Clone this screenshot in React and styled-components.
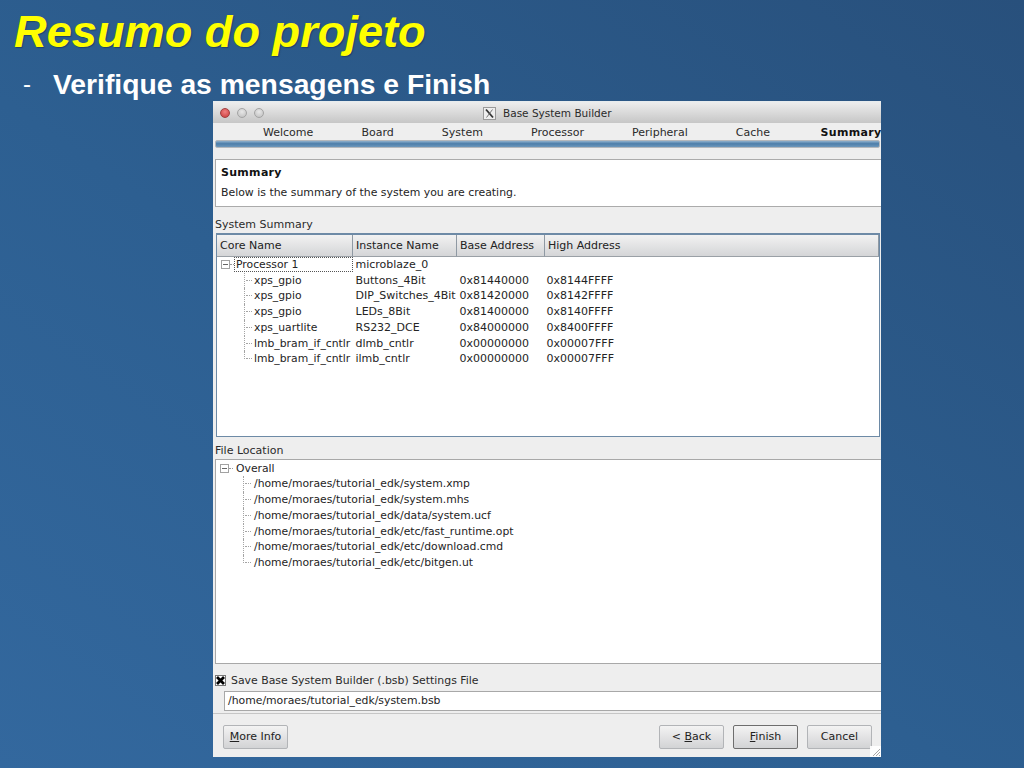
import React from "react";
import styled, { createGlobalStyle } from "styled-components";

const Global = createGlobalStyle`
  html, body { margin: 0; padding: 0; }
  body { width: 1024px; height: 768px; overflow: hidden; }
`;

const Slide = styled.div`
  width: 1024px; height: 768px; box-sizing: border-box; overflow: hidden;
  background: linear-gradient(35deg, #33689e 0%, #2d5f91 45%, #28507c 100%);
  font-family: "Liberation Sans", Arial, sans-serif;
  padding: 5px 0 0 14px;
`;
const Title = styled.h1`
  margin: 0; font-size: 45.2px; line-height: 54px; font-weight: 700; font-style: italic; color: #ffff00;
  text-shadow: 1px 1px 1px rgba(20,40,70,.5);
`;
const Bullet = styled.div`
  display: flex; margin: 9px 0 0 9px; color: #fff; font-size: 28.3px; line-height: 32px; font-weight: 700;
  height: 33px; white-space: nowrap;
`;
const Dash = styled.span`width: 30px; font-weight: 400; font-size: 24px;`;
const Win = styled.div`
  margin-left: 199px; width: 668px; height: 656px; display: flex; flex-direction: column;
  background: #eeeeee; color: #242424; overflow: hidden; position: relative;
  font-family: "DejaVu Sans", sans-serif; font-size: 11px; line-height: 15.75px;
`;
const TitleBar = styled.div`
  height: 22px; flex: none; box-sizing: border-box; display: flex; align-items: center; padding: 2px 0 0 7px;
  background: linear-gradient(#e6ecef 0, #ececec 2px, #c6c6c6 100%);
`;
const Light = styled.span`
  width: 10px; height: 10px; border-radius: 50%; margin-right: 7px; box-sizing: border-box;
  border: 1px solid ${p => p.$red ? "#a04040" : "#a4a4a4"};
  background: ${p => p.$red ? "radial-gradient(circle at 50% 35%, #f08080, #c83a3a)" : "radial-gradient(circle at 50% 35%, #e8e8e8, #bdbdbd)"};
`;
const WinTitle = styled.div`
  display: flex; align-items: center; gap: 6px; margin-left: 212px; color: #2a2a2a; font-size: 10.5px;
`;
const WinTitleText = styled.span`padding: 2px 0 0 1px;`;
const Tabs = styled.div`
  height: 16px; flex: none; box-sizing: border-box; padding: 2px 0 0 50px;
  display: flex; gap: 48.1px; white-space: nowrap; color: #2b2b2b;
`;
const Tab = styled.span`
  font-weight: ${p => p.$on ? 700 : 400}; color: ${p => p.$on ? "#111" : "inherit"};
  letter-spacing: ${p => p.$on ? ".3px" : "0"};
  margin-left: ${p => p.$on ? "2.5px" : "0"};
`;
const Progress = styled.div`
  height: 8px; flex: none; margin: 1px 1px 0 2px; box-sizing: border-box; border: 1px solid #b4b8bc; border-radius: 2px;
  background: linear-gradient(#8fb0cc, #4d7eaa 45%, #6d97bb);
`;
const Header = styled.div`
  height: 48px; flex: none; margin: 11px 0 0 2px; box-sizing: border-box; padding: 5px 0 0 5px;
  background: #fff; border: 1px solid #ababab; border-right: 0; font-size: 10.9px;
`;
const HeadTitle = styled.div`font-weight: 700; color: #111; height: 20px; line-height: 15px; font-size: 11px; letter-spacing: .3px;`;
const Label = styled.div`
  flex: none; margin: ${p => p.$top}px 0 0 2px; height: 15px; line-height: 15px; color: #2b2b2b;
`;
const TableFrame = styled.div`
  flex: none; height: 204px; margin: 1px 1px 0 3px; box-sizing: border-box;
  background: #fff; border: 1px solid #6d8aa6; border-top-width: 2px;
`;
const FileFrame = styled.div`
  flex: none; height: 205px; margin: 1px 0 0 2px; box-sizing: border-box;
  background: #fff; border: 1px solid #a8a8a8; border-right: 0; padding-top: .5px;
`;
const HeadRow = styled.div`
  display: grid; grid-template-columns: 136px 104px 88px 1fr; height: 22px; margin-bottom: -.1px;
`;
const HeadCell = styled.div`
  display: flex; align-items: center; padding-left: 3px; color: #222; box-sizing: border-box;
  background: linear-gradient(#f2f2f2, #d4d5d7);
  border-right: 1px solid #8f99a3; border-bottom: 1px solid #9aa0a6;
`;
const Row = styled.div`
  display: grid; grid-template-columns: 136px 104px 87px 1fr; height: 15.75px; white-space: nowrap;
`;
const CoreCell = styled.div`
  display: flex; align-items: center; padding-left: ${p => p.$child ? 27 : 4}px;
  font-size: 10.8px;
`;
const Cell = styled.div`padding-left: 2.5px;`;
const Toggle = styled.span`
  width: 9px; height: 9px; flex: none; box-sizing: border-box; border: 1px solid #a2a2a2; position: relative; background: #fff;
  &::after { content: ""; position: absolute; left: 1px; right: 1px; top: 3px; height: 1px; background: #666; }
`;
const Dots = styled.span`width: 4px; flex: none; border-top: 1px dotted #999;`;
const Focused = styled.span`
  flex: 1; padding-left: 1px; height: 15px; line-height: 14px; box-sizing: border-box; border: 1px dotted #555;
`;
const Plain = styled.span`padding-left: 3px;`;
const Branch = styled.span`
  width: 8px; flex: none; box-sizing: border-box; position: relative; margin-right: ${p => p.$gap}px;
  border-left: 1px dotted #a4a4a4; height: ${p => p.$last ? "8px" : "15.75px"};
  align-self: flex-start;
  &::after { content: ""; position: absolute; left: 1px; width: 6px; top: 7px; border-top: 1px dotted #a4a4a4; }
`;
const SaveRow = styled.div`
  flex: none; display: flex; align-items: center; gap: 5px; margin: 9px 0 0 2px; height: 15px; color: #2b2b2b; font-size: 10.9px;
`;
const Check = styled.span`
  width: 11px; height: 11px; flex: none; box-sizing: border-box; border: 1px solid #777; background: #fff; display: flex;
`;
const PathInput = styled.div`
  flex: none; height: 20px; margin: 3px 0 0 11px; padding-left: 3px; box-sizing: border-box; background: #fff;
  border: 1px solid #a8a8a8; border-right: 0; line-height: 18px; font-size: 10.85px;
`;
const Separator = styled.div`flex: none; height: 1px; background: #c6c6c6; margin-top: 2px;`;
const ButtonBar = styled.div`
  flex: none; display: flex; gap: 9px; padding: 11px 9px 0 10px;
`;
const Btn = styled.div`
  width: 65px; height: 24px; box-sizing: border-box; border-radius: 2px; display: flex; align-items: center; justify-content: center;
  color: #222; background: linear-gradient(#f3f3f3, #d2d3d5);
  border: 1px solid ${p => p.$def ? "#6e6e6e" : "#b2b4b7"};
  ${p => p.$push ? "margin-right: auto;" : ""}
`;
const Key = styled.span`text-decoration: underline;`;
const Grip = styled.svg`position: absolute; right: 0; bottom: 0;`;

const rows = [
  ["xps_gpio", "Buttons_4Bit", "0x81440000", "0x8144FFFF"],
  ["xps_gpio", "DIP_Switches_4Bit", "0x81420000", "0x8142FFFF"],
  ["xps_gpio", "LEDs_8Bit", "0x81400000", "0x8140FFFF"],
  ["xps_uartlite", "RS232_DCE", "0x84000000", "0x8400FFFF"],
  ["lmb_bram_if_cntlr", "dlmb_cntlr", "0x00000000", "0x00007FFF"],
  ["lmb_bram_if_cntlr", "ilmb_cntlr", "0x00000000", "0x00007FFF"],
];
const files = [
  "/home/moraes/tutorial_edk/system.xmp",
  "/home/moraes/tutorial_edk/system.mhs",
  "/home/moraes/tutorial_edk/data/system.ucf",
  "/home/moraes/tutorial_edk/etc/fast_runtime.opt",
  "/home/moraes/tutorial_edk/etc/download.cmd",
  "/home/moraes/tutorial_edk/etc/bitgen.ut",
];
const tabs = ["Welcome", "Board", "System", "Processor", "Peripheral", "Cache"];

export default function App() {
  return (
    <Slide>
      <Global />
      <Title>Resumo do projeto</Title>
      <Bullet><Dash>-</Dash>Verifique as mensagens e Finish</Bullet>
      <Win>
        <TitleBar>
          <Light $red /><Light /><Light />
          <WinTitle>
            <svg width="13" height="13" viewBox="0 0 13 13">
              <rect x=".5" y=".5" width="12" height="12" fill="#eeeeee" stroke="#9a9a9a" />
              <path d="M3 2.5 L10 10.5" stroke="#333" strokeWidth="1.8" fill="none" />
              <path d="M9.5 2.5 L3.5 10.5" stroke="#555" strokeWidth=".8" fill="none" />
            </svg>
            <WinTitleText>Base System Builder</WinTitleText>
          </WinTitle>
        </TitleBar>
        <Tabs>
          {tabs.map(t => <Tab key={t}>{t}</Tab>)}
          <Tab $on>Summary</Tab>
        </Tabs>
        <Progress />
        <Header>
          <HeadTitle>Summary</HeadTitle>
          <div>Below is the summary of the system you are creating.</div>
        </Header>
        <Label $top={10}>System Summary</Label>
        <TableFrame>
          <HeadRow>
            <HeadCell>Core Name</HeadCell>
            <HeadCell>Instance Name</HeadCell>
            <HeadCell>Base Address</HeadCell>
            <HeadCell>High Address</HeadCell>
          </HeadRow>
          <Row>
            <CoreCell>
              <Toggle /><Dots />
              <Focused>Processor 1</Focused>
            </CoreCell>
            <Cell>microblaze_0</Cell>
          </Row>
          {rows.map((r, i) => (
            <Row key={i}>
              <CoreCell $child>
                <Branch $gap={2} $last={i === rows.length - 1} />
                <span>{r[0]}</span>
              </CoreCell>
              <Cell>{r[1]}</Cell>
              <Cell>{r[2]}</Cell>
              <Cell>{r[3]}</Cell>
            </Row>
          ))}
        </TableFrame>
        <Label $top={6}>File Location</Label>
        <FileFrame>
          <Row>
            <CoreCell>
              <Toggle /><Dots />
              <Plain>Overall</Plain>
            </CoreCell>
          </Row>
          {files.map((f, i) => (
            <Row key={f}>
              <CoreCell $child>
                <Branch $gap={3} $last={i === files.length - 1} />
                <span>{f}</span>
              </CoreCell>
            </Row>
          ))}
        </FileFrame>
        <SaveRow>
          <Check>
            <svg width="9" height="9" viewBox="0 0 9 9">
              <path d="M1 1 L8 8 M8 1 L1 8" stroke="#000" strokeWidth="2.8" />
            </svg>
          </Check>
          Save Base System Builder (.bsb) Settings File
        </SaveRow>
        <PathInput>/home/moraes/tutorial_edk/system.bsb</PathInput>
        <Separator />
        <ButtonBar>
          <Btn $push><span><Key>M</Key>ore Info</span></Btn>
          <Btn><span>&lt; <Key>B</Key>ack</span></Btn>
          <Btn $def><span><Key>F</Key>inish</span></Btn>
          <Btn>Cancel</Btn>
        </ButtonBar>
        <Grip width="11" height="11" viewBox="0 0 11 11">
          <rect width="11" height="11" fill="#fff" opacity=".9" />
          <path d="M10 3 L3 10 M10 6 L6 10 M10 9 L9 10" stroke="#a8a8a8" />
        </Grip>
      </Win>
    </Slide>
  );
}
